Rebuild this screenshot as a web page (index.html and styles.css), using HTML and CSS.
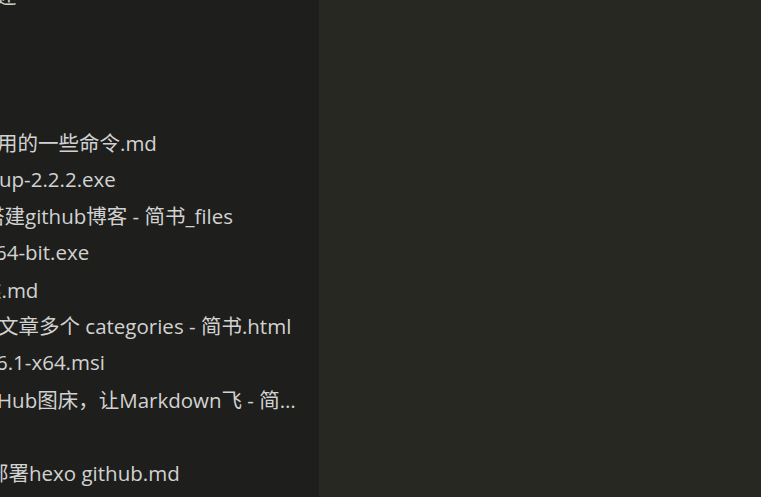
FILE: index.html
```html
<!DOCTYPE html>
<html lang="zh-CN">
<head>
<meta charset="utf-8">
<title>Explorer</title>
<link rel="stylesheet" href="styles.css">
</head>
<body>
<div class="app">
  <aside class="sidebar">
    <ul class="tree">
      <li class="row"><span class="name cut-4">述</span></li>
      <li class="row"></li>
      <li class="row"></li>
      <li class="row"></li>
      <li class="row"><span class="name cut-3">用的一些命令.md</span></li>
      <li class="row"><span class="name cut-1">up-2.2.2.exe</span></li>
      <li class="row"><span class="name cut-16">搭建github博客 - 简书_files</span></li>
      <li class="row"><span class="name cut-5">64-bit.exe</span></li>
      <li class="row"><span class="name cut-19">述.md</span></li>
      <li class="row"><span class="name cut-2">文章多个 categories - 简书.html</span></li>
      <li class="row"><span class="name cut-4">6.1-x64.msi</span></li>
      <li class="row"><span class="name cut-3">Hub图床，让Markdown飞 - 简书.html</span></li>
      <li class="row"></li>
      <li class="row"><span class="name cut-12">部署hexo github.md</span></li>
    </ul>
  </aside>
  <main class="editor"></main>
</div>
</body>
</html>
```
FILE: styles.css
```css
html, body {
  margin: 0;
  padding: 0;
  height: 100%;
  overflow: hidden;
}
body {
  background: #272822;
  font-family: "Open Sans", "Noto Sans CJK SC", sans-serif;
}
.app {
  display: flex;
  height: 100%;
}
.sidebar {
  width: 319px;
  flex: none;
  background: #1e1f1c;
  overflow: hidden;
  padding-right: 19px;
  box-sizing: border-box;
}
.editor {
  flex: 1;
  background: #272822;
}
.tree {
  list-style: none;
  margin: -23px 0 0 0;
  padding: 0;
}
.row {
  height: 36.67px;
  display: flex;
  align-items: center;
  overflow: hidden;
}
.name {
  display: block;
  color: #d2d2d2;
  font-size: 20.5px;
  white-space: nowrap;
  overflow: hidden;
  text-overflow: ellipsis;
  min-width: 0;
  flex: 1;
}
.cut-1 { text-indent: -1px; }
.cut-2 { text-indent: -2px; }
.cut-3 { text-indent: -3px; }
.cut-4 { text-indent: -4px; }
.cut-5 { text-indent: -5px; }
.cut-12 { text-indent: -12px; }
.cut-16 { text-indent: -16px; }
.cut-19 { text-indent: -19px; }
```
